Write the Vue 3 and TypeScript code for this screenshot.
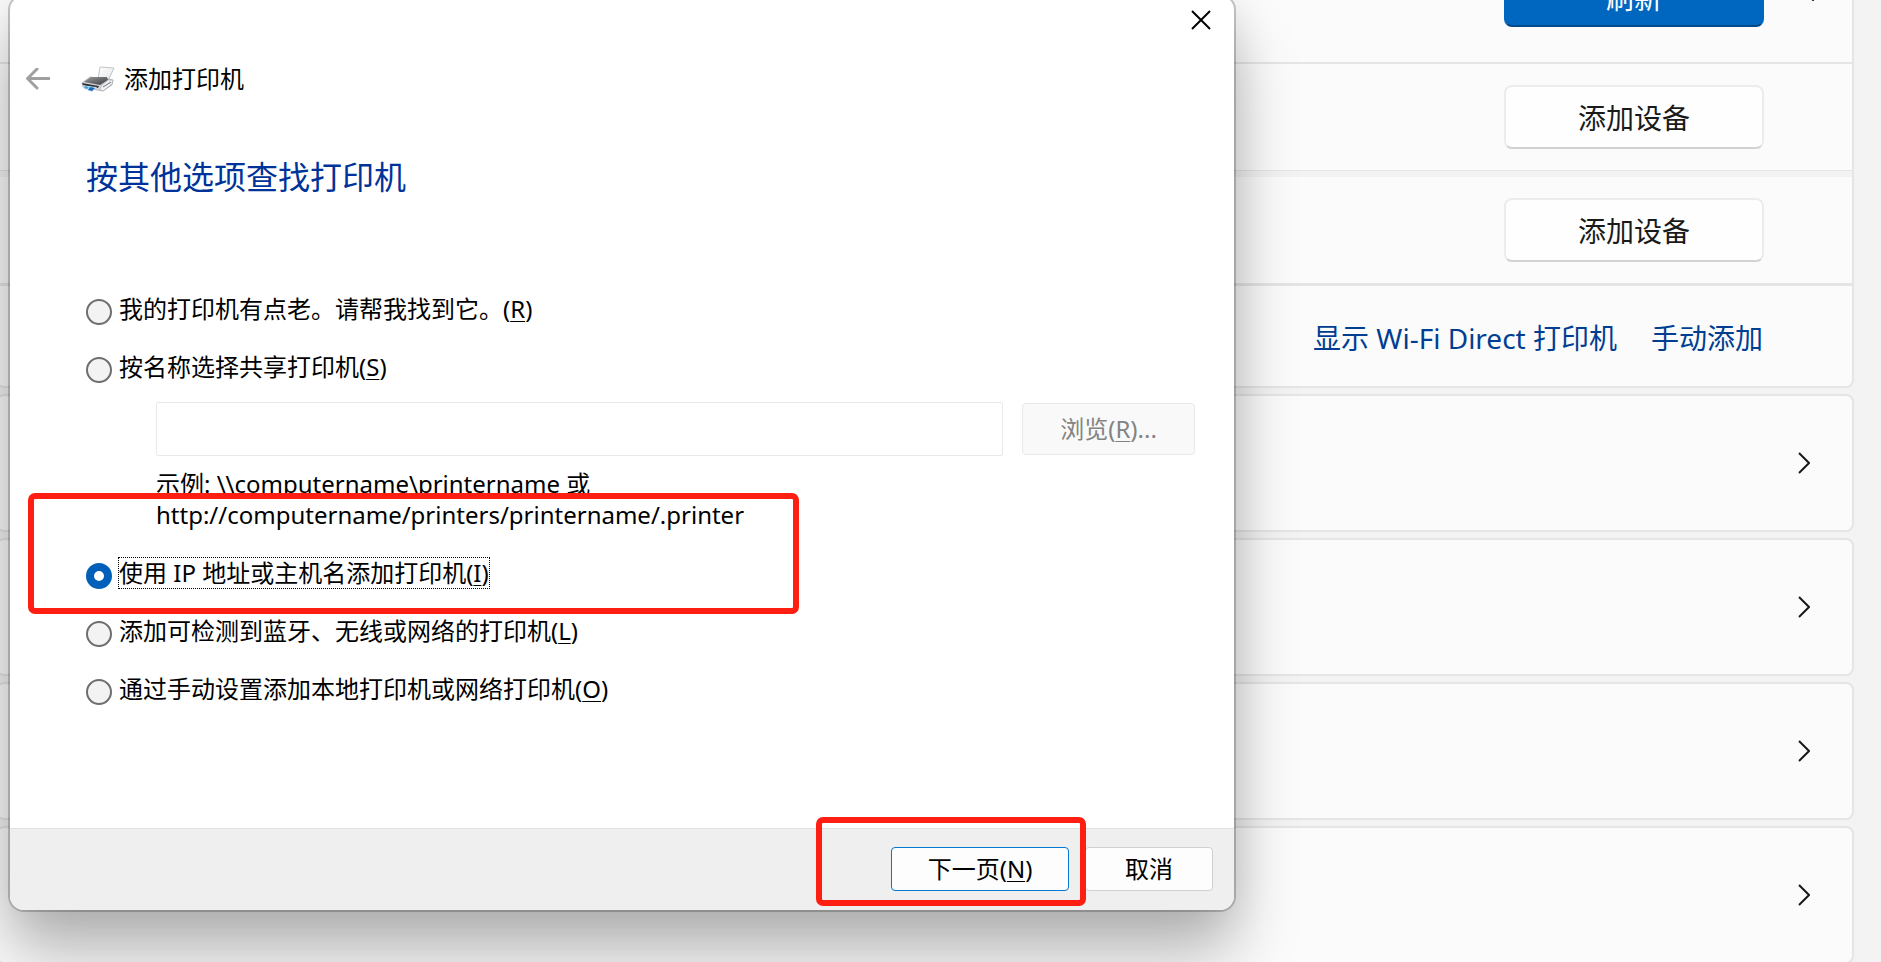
<script setup lang="ts">
import { ref } from 'vue'

interface PrinterOption {
  id: string
  text: string
  key: string
}

const shareOptions: PrinterOption[] = [
  { id: 'old', text: '我的打印机有点老。请帮我找到它。', key: 'R' },
  { id: 'share', text: '按名称选择共享打印机', key: 'S' },
]
const otherOptions: PrinterOption[] = [
  { id: 'ip', text: '使用 IP 地址或主机名添加打印机', key: 'I' },
  { id: 'network', text: '添加可检测到蓝牙、无线或网络的打印机', key: 'L' },
  { id: 'manual', text: '通过手动设置添加本地打印机或网络打印机', key: 'O' },
]
const selected = ref('ip')
const shareName = ref('')
const cards = [1, 2, 3, 4]
</script>

<template>
  <div class="screen">
    <main class="settings">
      <section class="group">
        <div class="row row-refresh">
          <button type="button" class="btn btn-accent">刷新</button>
          <svg class="expander" viewBox="0 0 22 12" aria-hidden="true"><path d="M1 1l10 10L21 1" /></svg>
        </div>
        <div class="row row-device">
          <button type="button" class="btn">添加设备</button>
        </div>
        <div class="strip"></div>
        <div class="row row-device last-device">
          <button type="button" class="btn">添加设备</button>
        </div>
        <div class="row row-links">
          <a href="#">显示 Wi-Fi Direct 打印机</a>
          <a href="#">手动添加</a>
        </div>
      </section>
      <button v-for="card in cards" :key="card" type="button" class="card" aria-label="展开">
        <svg class="chevron" viewBox="0 0 12 22" aria-hidden="true"><path d="M1 1l10 10L1 21" /></svg>
      </button>
    </main>

    <div class="dialog" role="dialog" aria-labelledby="dialog-title">
      <div class="caption">
        <button type="button" class="close" aria-label="关闭">
          <svg viewBox="0 0 20 20" aria-hidden="true"><path d="M1 1l18 18M19 1L1 19" /></svg>
        </button>
      </div>
      <header class="header">
        <button type="button" class="back" aria-label="返回">
          <svg viewBox="0 0 24 22" aria-hidden="true"><path d="M23 10.500H2M11 1L1.500 10.500 11 20" /></svg>
        </button>
        <svg class="printer" viewBox="0 0 34 26" aria-hidden="true">
          <defs>
            <linearGradient id="paper" x1="0" y1="0" x2="1" y2="1">
              <stop offset="0" stop-color="#fff" />
              <stop offset="1" stop-color="#e2e4e6" />
            </linearGradient>
            <linearGradient id="lid" x1="0" y1="0" x2="1" y2="1">
              <stop offset="0" stop-color="#9a9da0" />
              <stop offset="1" stop-color="#3a3a3a" />
            </linearGradient>
          </defs>
          <path d="M19 1l14 1-6 13-10-2z" fill="url(#paper)" stroke="#b4b7ba" stroke-width=".8" />
          <path d="M1 17l8-6 18 2 5 1-1 5-9 6-6-1-14-3z" fill="#d5d8db" stroke="#969a9e" stroke-width=".6" />
          <path d="M3 16l7-5h16l1 3-8 5z" fill="url(#lid)" />
          <path d="M27 14l5 0-1 4-9 7-3-1 1-4z" fill="#eef0f1" stroke="#9ba0a4" stroke-width=".6" />
          <path d="M1 17l17 3-1 2L2 19z" fill="#303438" />
          <path d="M2 20l14 1-5 5-9-4z" fill="#c5ddf0" />
          <path d="M4 20l4 1-2 2-3-1z" fill="#3fa4e5" />
          <path d="M9 21l5 1-3 3-4-1z" fill="#176bc0" />
          <path d="M22 21l8-5" stroke="#6c7074" stroke-width="1" />
        </svg>
        <span id="dialog-title" class="title">添加打印机</span>
      </header>

      <div class="body">
        <h1>按其他选项查找打印机</h1>
        <div class="options" role="radiogroup" aria-label="按其他选项查找打印机">
          <div v-for="o in shareOptions" :key="o.id" class="option">
            <input :id="o.id" v-model="selected" type="radio" name="method" :value="o.id" />
            <label :for="o.id">{{ o.text }}(<u>{{ o.key }}</u>)</label>
          </div>
          <div class="share">
            <div class="share-row">
              <input v-model="shareName" type="text" disabled aria-label="共享打印机名称" />
              <button type="button" class="dlg-btn browse" disabled>浏览(<u>R</u>)...</button>
            </div>
            <p class="example">示例: \\computername\printername 或<br />http://computername/printers/printername/.printer</p>
          </div>
          <div v-for="o in otherOptions" :key="o.id" class="option">
            <input :id="o.id" v-model="selected" type="radio" name="method" :value="o.id" />
            <label :for="o.id" :class="{ focused: selected === o.id }">{{ o.text }}(<u>{{ o.key }}</u>)</label>
          </div>
        </div>
        <div class="mark mark-option"></div>
      </div>

      <footer class="footer">
        <button type="button" class="dlg-btn next">下一页(<u>N</u>)</button>
        <button type="button" class="dlg-btn cancel">取消</button>
        <div class="mark mark-next"></div>
      </footer>
    </div>
  </div>
</template>

<style>
body {
  margin: 0;
}
</style>

<style scoped>
* {
  box-sizing: border-box;
}
.screen {
  position: relative;
  height: 100vh;
  overflow: hidden;
  background: #f3f3f3;
  color: #1a1a1a;
  font-family: 'Noto Sans', 'Noto Sans CJK SC', sans-serif;
  font-size: 24px;
}
button,
input {
  font: inherit;
  color: inherit;
}
svg {
  display: block;
  fill: none;
}

.settings {
  display: flex;
  flex-direction: column;
  gap: 6px;
  margin: -72px 27px 0 -4px;
}
.group {
  border: 2px solid #e5e5e5;
  border-top: 0;
  border-radius: 8px;
  background: #fbfbfb;
}
.row {
  display: flex;
  align-items: center;
  justify-content: flex-end;
  padding-right: 88px;
}
.row-refresh {
  height: 136px;
  gap: 38px;
  padding-right: 28px;
  border-bottom: 2px solid #e5e5e5;
}
.row-device {
  height: 107px;
  border-bottom: 1px solid #e5e5e5;
}
.last-device {
  height: 109px;
  border-bottom-width: 3px;
}
.strip {
  height: 6px;
  background: #f3f3f3;
}
.row-links {
  height: 100px;
  gap: 34px;
  padding-top: 2px;
  padding-right: 89px;
  font-size: 28px;
}
.row-links a {
  color: #003e92;
  text-decoration: none;
}
.btn {
  width: 260px;
  height: 64px;
  padding: 0;
  border: 2px solid #ececec;
  border-bottom-color: #d2d2d2;
  border-radius: 8px;
  background: #fefefe;
  font-size: 28px;
}
.btn-accent {
  padding-top: 4px;
  border-color: #0067c0;
  border-bottom-color: #004a8a;
  background: #0067c0;
  color: #fff;
}
.expander {
  width: 22px;
  height: 12px;
  stroke: #1a1a1a;
  stroke-width: 2;
}
.card {
  display: flex;
  align-items: center;
  justify-content: flex-end;
  height: 138px;
  padding: 0 42px 0 0;
  border: 2px solid #e5e5e5;
  border-radius: 8px;
  background: #fbfbfb;
}
.chevron {
  width: 12px;
  height: 22px;
  stroke: #1a1a1a;
  stroke-width: 2;
}

.dialog {
  position: absolute;
  top: -4px;
  left: 10px;
  display: flex;
  flex-direction: column;
  width: min(1224px, 96vw);
  border-radius: 14px;
  background: #fff;
  color: #000;
  box-shadow:
    0 0 0 2px rgba(0, 0, 0, 0.2),
    0 44px 64px rgba(0, 0, 0, 0.27),
    0 4px 42px rgba(0, 0, 0, 0.1);
}
.caption {
  display: flex;
  justify-content: flex-end;
}
.close {
  display: grid;
  place-items: center;
  width: 66px;
  height: 48px;
  padding: 0;
  border: 0;
  background: none;
}
.close svg {
  width: 20px;
  height: 20px;
  stroke: #000;
  stroke-width: 2;
}
.header {
  display: flex;
  align-items: center;
  height: 32px;
  margin-top: 19px;
  padding-left: 16px;
}
.back {
  margin-right: 31px;
  padding: 0;
  border: 0;
  background: none;
}
.back svg {
  width: 24px;
  height: 22px;
  stroke: #a0a0a0;
  stroke-width: 3;
  stroke-linecap: round;
}
.printer {
  width: 34px;
  height: 26px;
  margin-right: 9px;
}
.title {
  line-height: 32px;
}
.body {
  position: relative;
  padding: 62px 39px 123px 76px;
}
h1 {
  margin: 0 0 96px;
  color: #003399;
  font-size: 32px;
  font-weight: 400;
  line-height: 40px;
}
.options {
  display: flex;
  flex-direction: column;
  gap: 26px;
}
.option {
  display: flex;
  align-items: flex-end;
  gap: 6px;
}
.option input {
  appearance: none;
  width: 26px;
  height: 26px;
  margin: 0;
  border: 2px solid #6e6e6e;
  border-radius: 50%;
  background: #f3f3f3;
}
.option input:checked {
  border: 8px solid #005fb8;
  background: #fff;
}
.option label {
  height: 32px;
  border: 1px solid transparent;
  line-height: 30px;
}
.option label.focused {
  border: 1px dotted #000;
}
u {
  text-decoration-thickness: 1px;
  text-underline-offset: 3px;
}
.share {
  margin: -7px 0 0 70px;
}
.share-row {
  display: flex;
  align-items: center;
  gap: 19px;
}
.share-row input {
  flex: 1;
  min-width: 0;
  height: 54px;
  padding: 0 12px;
  border: 1px solid #e9e9e9;
  border-radius: 2px;
  background: #fff;
}
.dlg-btn {
  height: 44px;
  padding: 0 0 4px;
  border: 1px solid #d0d0d0;
  border-radius: 4px;
  background: #fdfdfd;
}
.dlg-btn.browse {
  width: 173px;
  height: 52px;
  border-color: #e9e9e9;
  background: #f9f9f9;
  color: #838383;
}
.example {
  margin: 12px 0 1px;
  line-height: 31px;
}
.footer {
  position: relative;
  display: flex;
  justify-content: flex-end;
  gap: 16px;
  padding: 18px 21px 19px;
  border-top: 1px solid #dfdfdf;
  border-radius: 0 0 14px 14px;
  background: #efefef;
}
.next {
  width: 178px;
  border-color: #0078d4;
}
.cancel {
  width: 128px;
}
.mark {
  position: absolute;
  border: 6px solid #ff1f12;
  border-radius: 7px;
  pointer-events: none;
}
.mark-option {
  top: 398px;
  left: 18px;
  width: 771px;
  height: 121px;
}
.mark-next {
  top: -12px;
  right: 148px;
  width: 270px;
  height: 89px;
}
</style>
